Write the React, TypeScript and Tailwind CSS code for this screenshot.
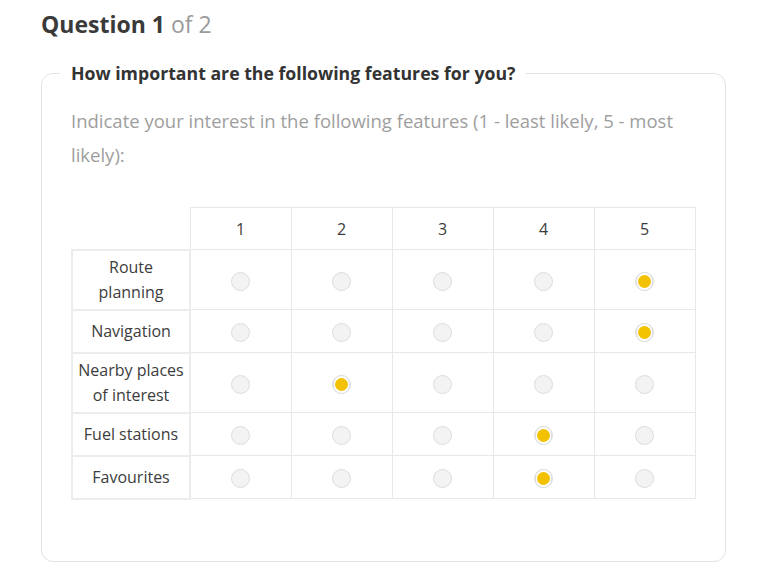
import React from 'react';

const rows = [
  { label: ['Route', 'planning'], value: 5, tall: true },
  { label: ['Navigation'], value: 5 },
  { label: ['Nearby places', 'of interest'], value: 2, tall: true },
  { label: ['Fuel stations'], value: 4 },
  { label: ['Favourites'], value: 4 },
];

const cols = [1, 2, 3, 4, 5];

function Radio({ checked }: { checked: boolean }) {
  return (
    <span className="inline-flex w-[19px] h-[19px] rounded-full border border-[#dddddd] bg-[#f3f3f3] items-center justify-center align-middle">
      {checked && (
        <span className="w-[19px] h-[19px] rounded-full bg-white border border-[#dddddd] flex items-center justify-center">
          <span className="w-[13px] h-[13px] rounded-full bg-[#f2c100]" />
        </span>
      )}
    </span>
  );
}

export default function App() {
  return (
    <div className="w-[763px] h-[585px] bg-white pl-[41px] pr-[38px] pt-[8px] font-['Open_Sans',sans-serif] text-[#404040]">
      <h1 className="text-[23px] leading-[32px] font-bold text-[#3a3a3a]">
        Question 1 <span className="font-normal text-[#9a9a9a]">of 2</span>
      </h1>

      <fieldset className="mt-[21px] border border-[#e3e3e3] rounded-[12px] h-[501px] px-[29px] pb-4">
        <legend className="px-[11px] -ml-[11px] text-[17.7px] font-bold text-[#333] leading-[24px]">
          How important are the following features for you?
        </legend>

        <p className="mt-[19px] text-[18.5px] leading-[34px] text-[#9e9e9e] w-[620px]">
          Indicate your interest in the following features (1 - least likely, 5 - most
          <br />
          likely):
        </p>

        <table className="mt-[35px] border-collapse table-fixed w-[624px] text-[16px] text-[#3d3d3d]">
          <colgroup>
            <col className="w-[118px]" />
            {cols.map((c) => (
              <col key={c} className="w-[101px]" />
            ))}
          </colgroup>
          <thead>
            <tr className="h-[42px]">
              <th />
              {cols.map((c) => (
                <th key={c} className="border border-[#e8e8e8] font-normal text-center">
                  {c}
                </th>
              ))}
            </tr>
          </thead>
          <tbody>
            {rows.map((r) => (
              <tr key={r.label[0]} className={r.tall ? 'h-[60px]' : 'h-[43px]'}>
                <td className="border-2 border-[#ececec] text-center leading-[25px] px-0">
                  {r.label.map((l, i) => (
                    <React.Fragment key={l}>
                      {i > 0 && <br />}
                      {l}
                    </React.Fragment>
                  ))}
                </td>
                {cols.map((c) => (
                  <td key={c} className="border border-[#e8e8e8] text-center">
                    <Radio checked={r.value === c} />
                  </td>
                ))}
              </tr>
            ))}
          </tbody>
        </table>
      </fieldset>
    </div>
  );
}
